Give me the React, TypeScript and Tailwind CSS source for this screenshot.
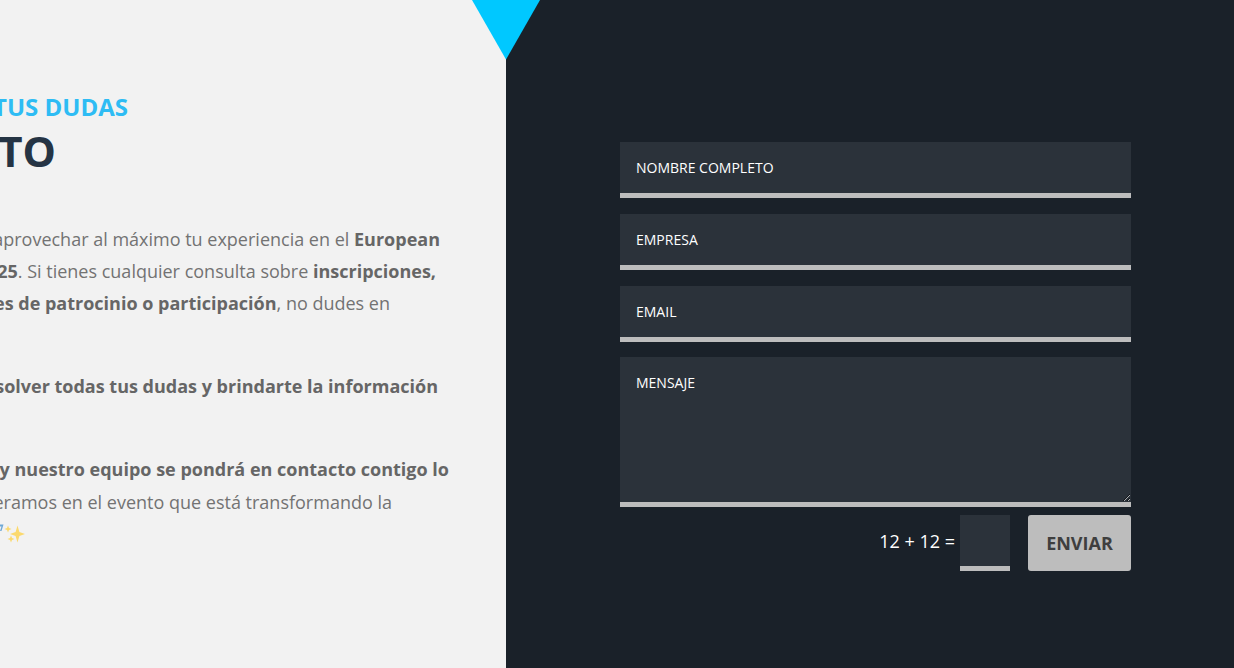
const serif = "font-['Open_Sans',sans-serif]";

function Line({ w, top, children }: { w: string; top?: string; children: React.ReactNode }) {
  return (
    <div className={`flex justify-end whitespace-nowrap h-[32.4px] leading-[32.4px] [&_b]:text-[#666666] ${w} ${top ?? ""}`}>
      <span className="shrink-0">{children}</span>
    </div>
  );
}

function Field({ placeholder }: { placeholder: string }) {
  return (
    <input
      placeholder={placeholder}
      className="block w-full h-[56px] bg-[#2b323a] border-b-[5px] border-[#bdbdbd] px-4 text-sm text-white placeholder:text-white outline-none"
    />
  );
}

export default function App() {
  return (
    <div className={`relative flex h-[668px] w-[1234px] overflow-hidden ${serif}`}>
      <div className="w-[506px] shrink-0 overflow-hidden bg-[#f2f2f2] pt-[91px]">
        <div className="flex justify-end w-[128px] whitespace-nowrap text-[24px] leading-[32px] font-bold text-[#2ebcf4]">
          <span className="shrink-0">RESUELVE TUS DUDAS</span>
        </div>
        <div className="flex justify-end w-[55px] whitespace-nowrap mt-[2px] text-[42px] leading-[52px] font-bold text-[#253444]">
          <span className="shrink-0 -mr-px">CONTACTO</span>
        </div>
        <div className="mt-[45.6px] text-[18px] text-[#737373]">
          <Line w="w-[440px]">
            Estamos aquí para ayudarte a aprovechar al máximo tu experiencia en el <b>European</b>
          </Line>
          <Line w="w-[436px]">
            <b>Congress 2025</b>. Si tienes cualquier consulta sobre <b>inscripciones,</b>
          </Line>
          <Line w="w-[390px]">
            <b>oportunidades de patrocinio o participación</b>, no dudes en
          </Line>
          <Line w="w-[438px]" top="mt-[50.6px]">
            <b>Estamos listos para resolver todas tus dudas y brindarte la información</b>
          </Line>
          <Line w="w-[449px]" top="mt-[50.6px]">
            <b>Completa el formulario y nuestro equipo se pondrá en contacto contigo lo</b>
          </Line>
          <Line w="w-[392px]">
            ¡Te esperamos en el evento que está transformando la
          </Line>
          <div className="flex items-center h-[32.4px]">
            <svg width="26" height="20" viewBox="0 0 26 20" className="block">
              <path d="M-1 0.5 H3.5 L1.5 7 H0 L1.5 2.5 H-1 Z" fill="#6fa8d6" />
              <path d="M17.5 1.5 L19.4 8.1 L25 10 L19.4 11.9 L17.5 18.5 L15.6 11.9 L10 10 L15.6 8.1 Z" fill="#fbd96e" />
              <path d="M8 1.5 L9 4 L11.5 5 L9 6 L8 8.5 L7 6 L4.5 5 L7 4 Z" fill="#fbd96e" />
              <path d="M11 11.5 L12 14 L14.5 15 L12 16 L11 18.5 L10 16 L7.5 15 L10 14 Z" fill="#fbd96e" />
            </svg>
          </div>
        </div>
      </div>

      <div className="flex-1 bg-[#1a2129] pl-[114px] pr-[103px] pt-[142px]">
        <div className="flex flex-col gap-4">
          <Field placeholder="NOMBRE COMPLETO" />
          <Field placeholder="EMPRESA" />
          <Field placeholder="EMAIL" />
        </div>
        <textarea
          placeholder="MENSAJE"
          className="block mt-[15px] w-full h-[150px] bg-[#2b323a] border-b-[5px] border-[#bdbdbd] px-4 py-4 text-sm leading-[20px] text-white placeholder:text-white outline-none"
        />
        <div className="mt-2 flex items-center justify-end">
          <span className="mb-1 text-[18px] text-white">12 + 12 =</span>
          <input className="ml-[5px] h-[56px] w-[50px] bg-[#2b323a] border-b-[5px] border-[#bdbdbd] outline-none" />
          <button className="ml-[18px] h-[56px] w-[103px] rounded-[3px] bg-[#bdbdbd] text-[18px] font-bold text-[#3f3f3f]">
            ENVIAR
          </button>
        </div>
      </div>

      <svg width="68" height="60" viewBox="0 0 68 60" className="absolute left-[472px] top-0">
        <polygon points="0,0 68,0 34,59.5" fill="#00c8ff" />
      </svg>
    </div>
  );
}
